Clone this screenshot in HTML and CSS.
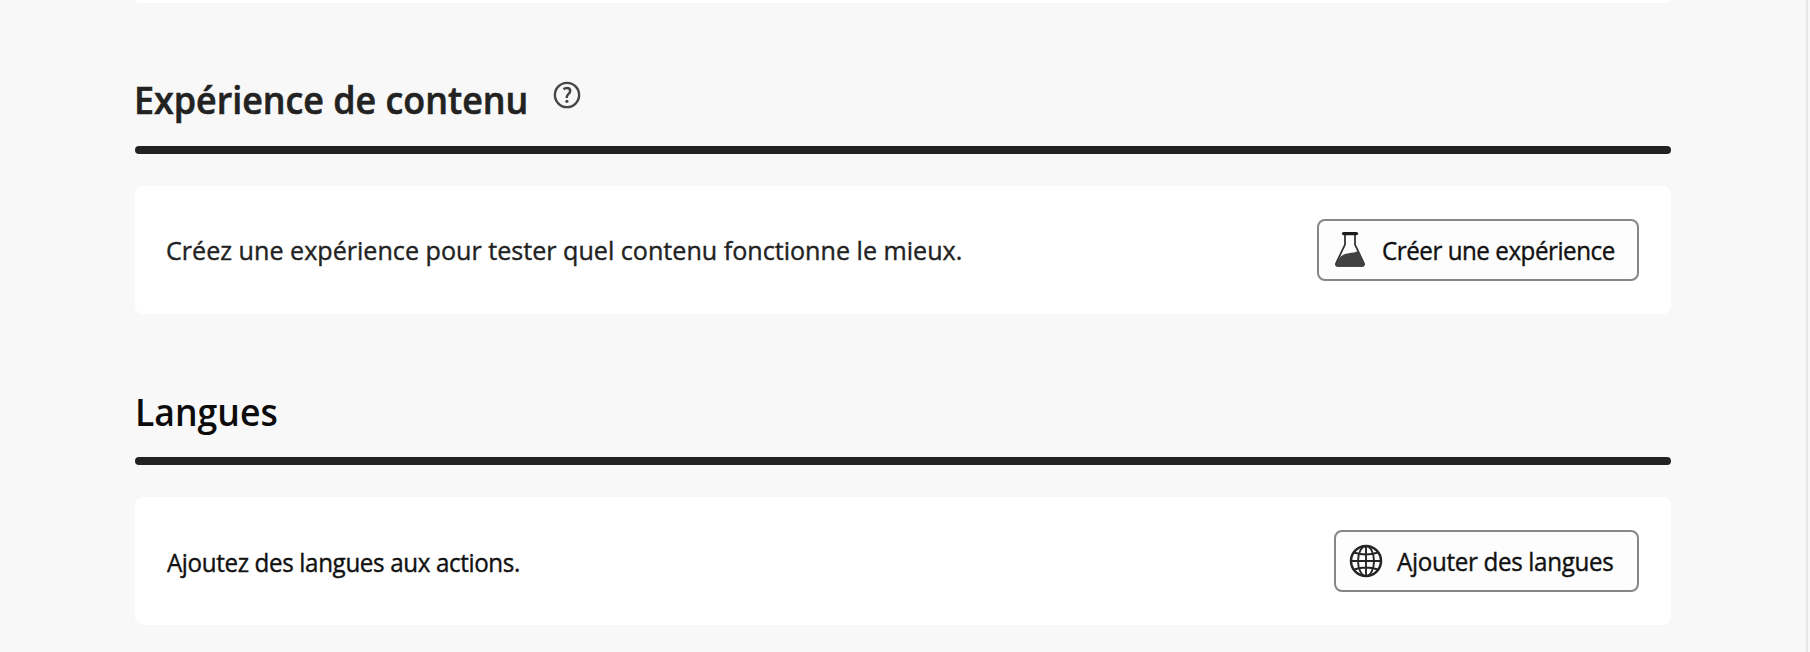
FILE: index.html
```html
<!DOCTYPE html>
<html lang="fr">
<head>
<meta charset="utf-8">
<title>Expérience de contenu</title>
<link rel="stylesheet" href="styles.css">
</head>
<body>
<main class="page">
  <div class="card card-previous"></div>
  <section class="section">
    <header class="section-header">
      <h2 class="title"><span class="title-experience">Expérience de contenu</span></h2>
      <svg class="help" viewBox="0 0 28 28" fill="none" stroke="#464646">
        <circle cx="14" cy="14" r="12.1" stroke-width="2.4"/>
        <path d="M10.5 8.3C11.4 7.5 12.6 7.1 13.9 7.1C16 7.1 17.2 8.3 17.2 10C17.2 12.8 13.7 13 13.7 16.4V17" stroke-width="2.5"/>
        <circle cx="13.9" cy="20.3" r="1.6" fill="#464646" stroke="none"/>
      </svg>
    </header>
    <div class="card">
      <p class="text text-experience">Créez une expérience pour tester quel contenu fonctionne le mieux.</p>
      <button class="button button-experience">
        <svg class="flask" viewBox="0 0 30 36">
          <path d="M10 2V12.5L1.2 31Q.2 34 3 34H27Q29.8 34 28.8 31L20 12.5V2" fill="none" stroke="#2c2c2c" stroke-width="1.7"/>
          <path d="M5.5 24.5C12 19.5 17 22.5 23.5 18.5L29 31Q29.6 34.8 27 34.8H3Q.4 34.8 1 31.5Z" fill="#414141"/>
          <path d="M8.5 1.6H21.5" stroke="#1c1c1c" stroke-width="3.2" stroke-linecap="round"/>
        </svg>
        <span class="label label-experience">Créer une expérience</span>
      </button>
    </div>
  </section>
  <section class="section">
    <header class="section-header">
      <h2 class="title"><span class="title-languages">Langues</span></h2>
    </header>
    <div class="card">
      <p class="text text-languages">Ajoutez des langues aux actions.</p>
      <button class="button button-languages">
        <svg class="globe" viewBox="0 0 34 34" fill="none" stroke="#252525" stroke-width="1.9">
          <circle cx="17" cy="17" r="15" stroke-width="2.5"/>
          <ellipse cx="17" cy="17" rx="8" ry="15"/>
          <path d="M17 2V32M2 17H32M5 8.5Q17 12.5 29 8.5M5 25.5Q17 21.5 29 25.5"/>
        </svg>
        <span class="label label-languages">Ajouter des langues</span>
      </button>
    </div>
  </section>
</main>
</body>
</html>
```
FILE: styles.css
```css
* { box-sizing: border-box; }
body {
  margin: 0;
  height: 652px;
  overflow: hidden;
  background: #f8f8f8;
  color: #222;
  font-family: "Open Sans", "Noto Sans", sans-serif;
}
.page {
  width: 1808px;
  height: 652px;
  padding: 0 135px;
  border-right: 2px solid #e6e6e6;
}
.card {
  display: flex;
  align-items: center;
  justify-content: space-between;
  width: 1536px;
  height: 128px;
  margin-top: 32px;
  padding: 0 32px 0 31px;
  border-radius: 8px;
  background: #fff;
}
.card-previous {
  height: 3px;
  margin: 0;
  border-radius: 0 0 8px 8px;
}
.section { height: 311px; }
.section-header {
  position: relative;
  display: flex;
  width: 1536px;
  height: 151px;
  padding-top: 69px;
}
.section-header::after {
  content: "";
  position: absolute;
  left: 0;
  right: 0;
  bottom: 0;
  height: 8px;
  border-radius: 4px;
  background: #222;
}
.title {
  width: 397px;
  margin: 0 0 0 -1px;
  font-size: 38px;
  line-height: 54px;
  font-weight: 600;
  white-space: nowrap;
}
.title-experience {
  display: inline-block;
  transform: scaleX(0.943);
  transform-origin: left;
  -webkit-text-stroke: 0.6px #222;
}
.title-languages {
  display: inline-block;
  margin: 1px 0 0 1px;
  color: #0c0c0c;
  transform: scaleX(0.937);
  transform-origin: left;
}
.help {
  width: 28px;
  height: 28px;
  margin: 9px 0 0 22px;
}
.text {
  margin: 0;
  font-size: 26px;
  line-height: 36px;
  font-weight: 400;
  white-space: nowrap;
  transform-origin: left;
  -webkit-text-stroke: 0.4px currentColor;
}
.text-experience { transform: scaleX(0.966); }
.text-languages {
  padding: 2px 0 0 1px;
  color: #111;
  letter-spacing: -0.39px;
  transform: scaleX(0.93);
}
.button {
  display: flex;
  align-items: center;
  height: 62px;
  padding: 0;
  border: 2px solid #868686;
  border-radius: 8px;
  background: #fdfdfd;
  color: #111;
  font: 400 26px/36px "Open Sans", "Noto Sans", sans-serif;
  white-space: nowrap;
}
.button-experience { width: 322px; padding-left: 16px; }
.button-languages { width: 305px; padding-left: 13px; }
.flask { flex: none; width: 30px; height: 36px; margin-right: 17px; }
.globe { flex: none; width: 34px; height: 34px; margin-right: 14px; }
.label {
  transform: scaleX(0.93);
  transform-origin: left;
  -webkit-text-stroke: 0.4px currentColor;
}
.label-experience { letter-spacing: -0.5px; }
.label-languages { letter-spacing: -0.36px; }
```
